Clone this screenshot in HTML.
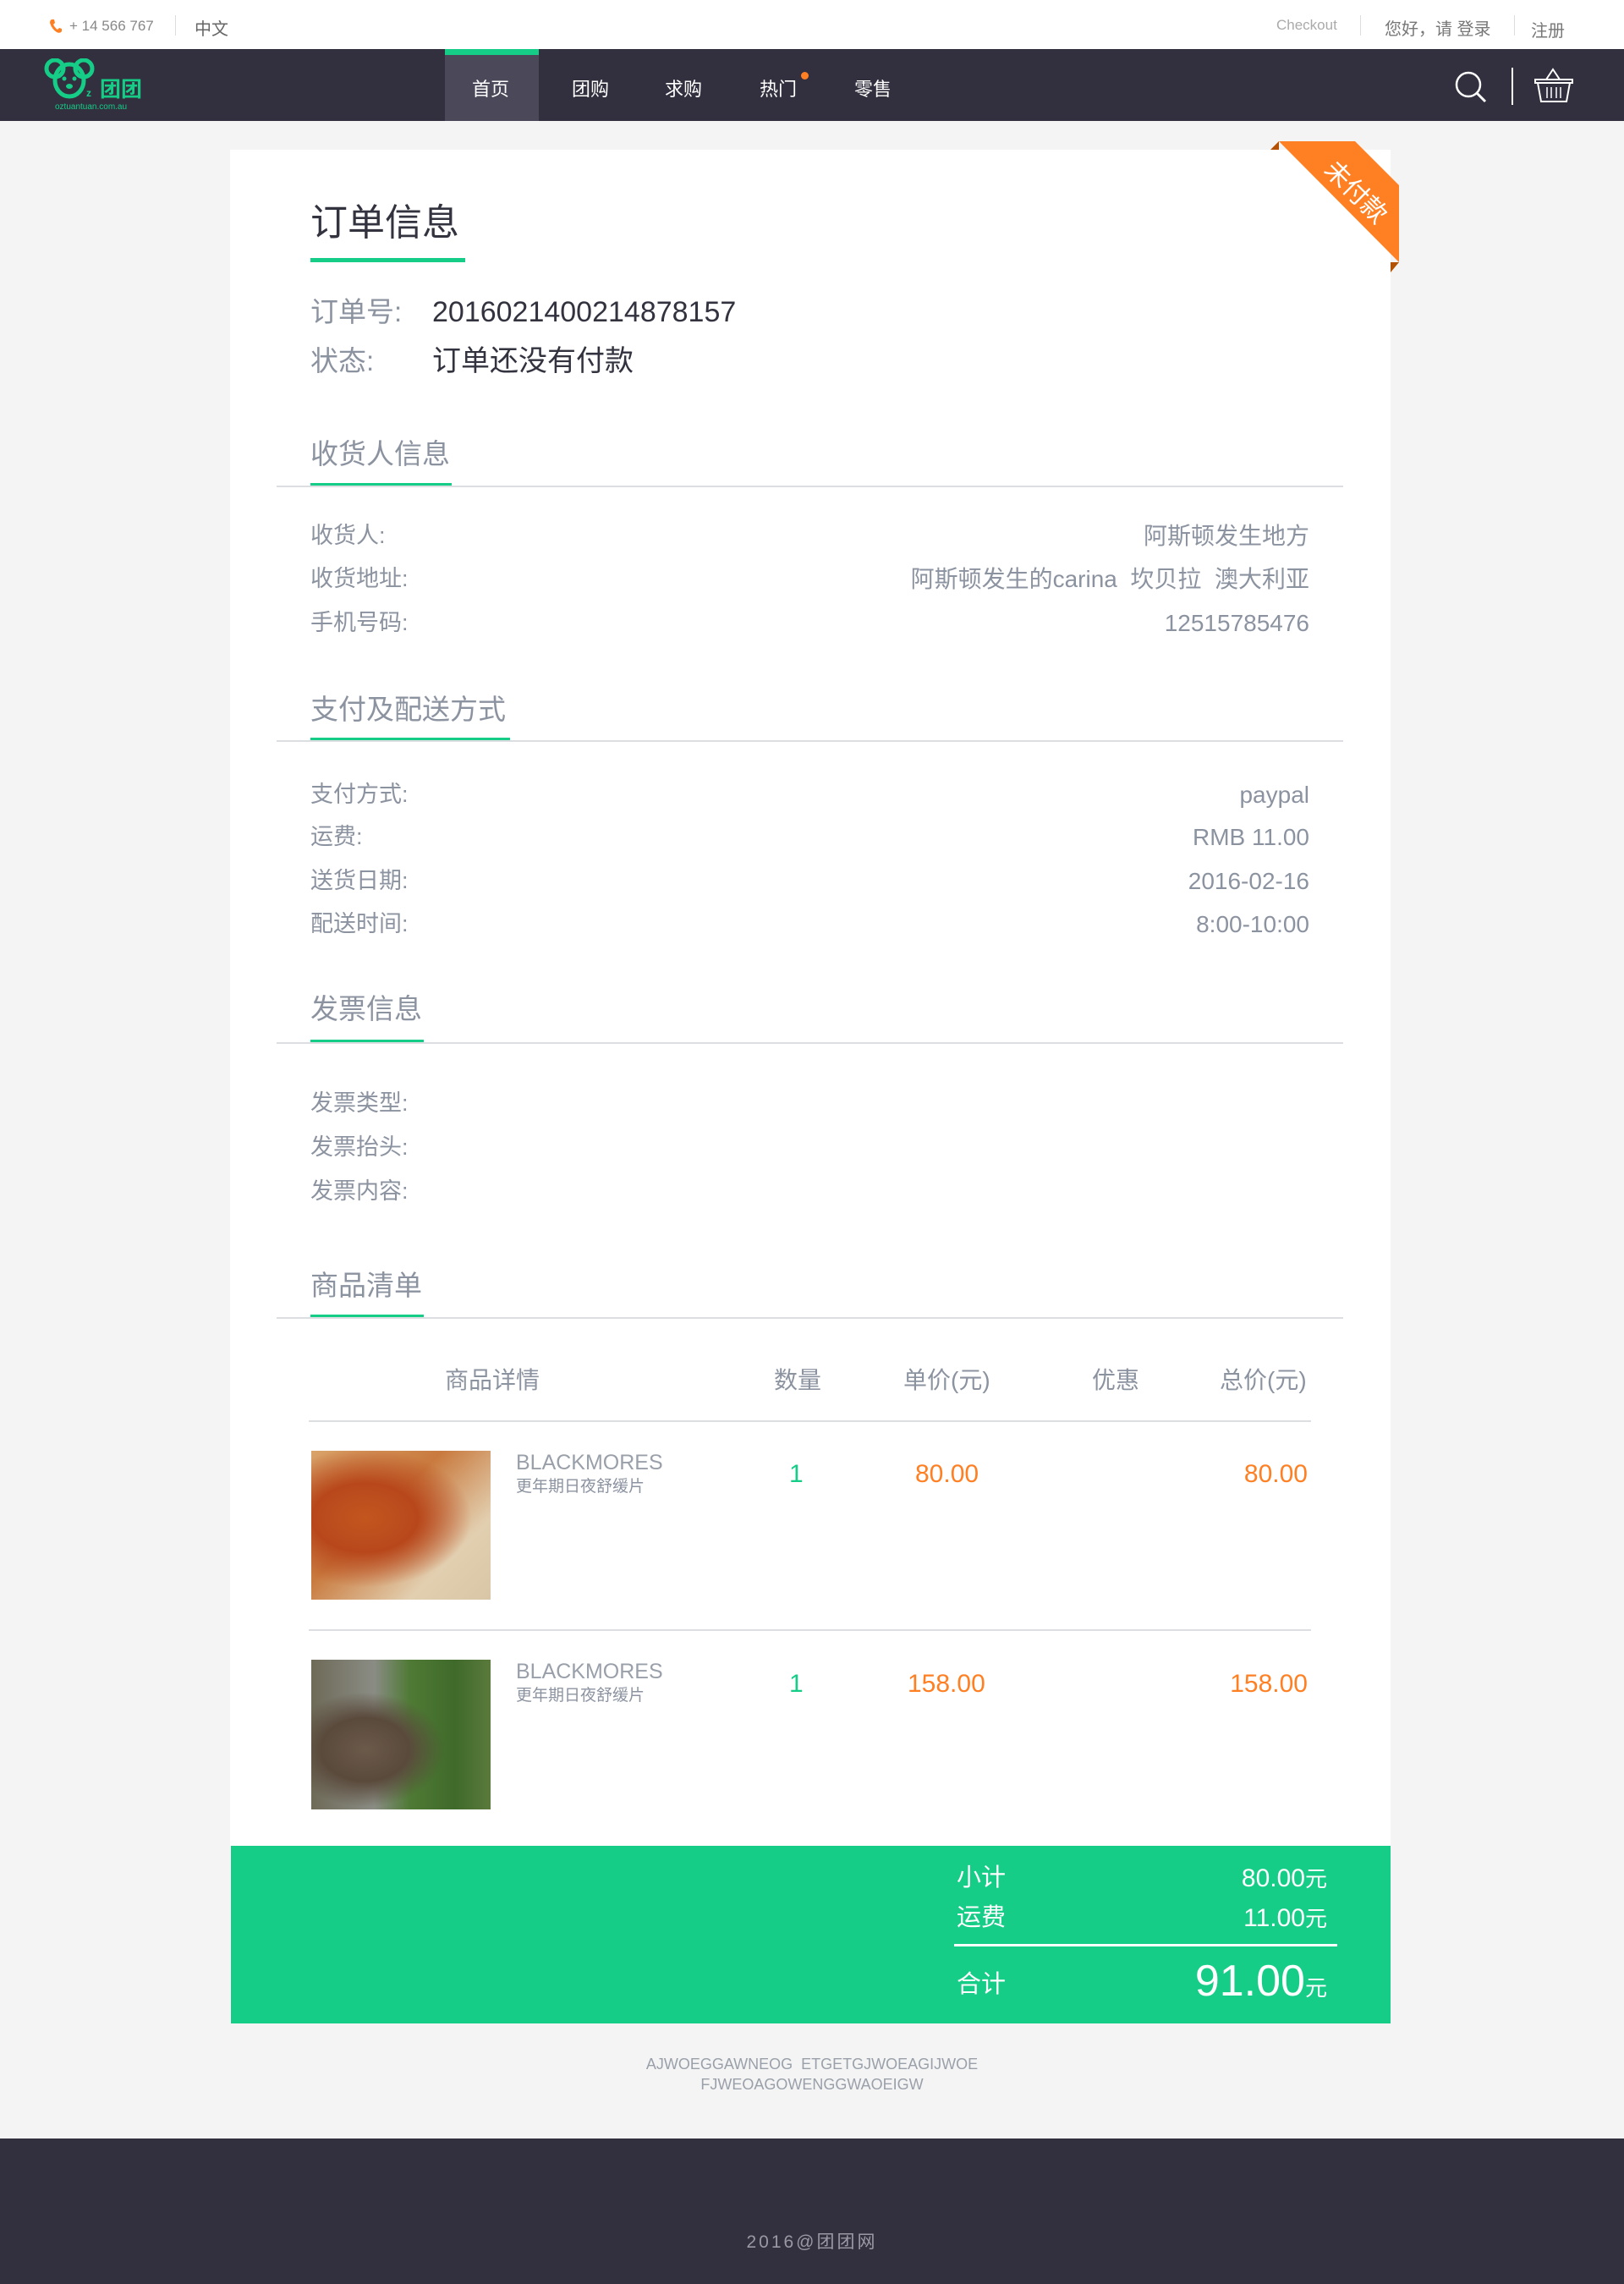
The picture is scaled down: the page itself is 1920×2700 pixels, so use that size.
<!DOCTYPE html>
<html><head><meta charset="utf-8"><style>
*{margin:0;padding:0;box-sizing:border-box}
body{width:1920px;height:2700px;background:#f4f4f4;position:relative;font-family:"Liberation Sans","Noto Sans CJK SC",sans-serif;overflow:hidden}
.a{position:absolute;white-space:nowrap}
.top{position:absolute;left:0;top:0;width:1920px;height:58px;background:#fff}
.nav{position:absolute;left:0;top:58px;width:1920px;height:85px;background:#322f3e}
.card{position:absolute;left:272px;top:177px;width:1372px;height:2215px;background:#fff}
.g{color:#8c93a0}
.sec{position:absolute;left:367px;font-size:33px;color:#8c93a0;line-height:1}
.ul{position:absolute;height:4px;background:#15cd86;left:367px}
.hl{position:absolute;left:327px;width:1261px;height:2px;background:#dcdee2}
.lab{position:absolute;left:367px;font-size:27px;color:#8c93a0;line-height:1}
.val{position:absolute;right:372px;font-size:28px;color:#8c93a0;line-height:1;text-align:right}
.th{position:absolute;top:1618px;font-size:28px;color:#8c93a0;line-height:1}
.or{color:#ff7f23}
</style></head><body>
<div class="top"></div>
<svg class="a" style="left:58px;top:22px" width="16" height="18" viewBox="0 0 16 18"><path d="M3 1 L6 1 L7 5 L5 7 Q7 11 10 13 L12 11 L15 12 L15 15 Q13 18 9 16 Q3 12 1 5 Q1 2 3 1Z" fill="#ff7f23"/></svg>
<div class="a" style="left:82px;top:21px;font-size:17px;color:#888">+ 14 566 767</div>
<div class="a" style="left:207px;top:18px;width:1px;height:24px;background:#ddd"></div>
<div class="a" style="left:230px;top:18px;font-size:20px;color:#666">中文</div>
<div class="a" style="left:1509px;top:20px;font-size:17px;color:#aaa">Checkout</div>
<div class="a" style="left:1608px;top:18px;width:1px;height:24px;background:#ddd"></div>
<div class="a" style="left:1637px;top:18px;font-size:20px;color:#777">您好，请 登录</div>
<div class="a" style="left:1790px;top:18px;width:1px;height:24px;background:#ddd"></div>
<div class="a" style="left:1810px;top:20px;font-size:20px;color:#777">注册</div>

<div class="nav"></div>
<svg class="a" style="left:52px;top:69px" width="122" height="66" viewBox="0 0 122 66">
<circle cx="13" cy="12" r="10" fill="none" stroke="#15cd86" stroke-width="5"/>
<circle cx="47" cy="12" r="10" fill="none" stroke="#15cd86" stroke-width="5"/>
<ellipse cx="30" cy="26" rx="17" ry="19" fill="none" stroke="#15cd86" stroke-width="5"/>
<circle cx="24" cy="24" r="2.5" fill="#15cd86"/><circle cx="36" cy="24" r="2.5" fill="#15cd86"/>
<ellipse cx="30" cy="33" rx="4" ry="3" fill="#15cd86"/>
<text x="50" y="45" font-size="12" font-weight="bold" fill="#15cd86" font-family="Liberation Sans">z</text>
<text x="66" y="45" font-size="25" font-weight="bold" fill="#15cd86" font-family="Noto Sans CJK SC">团团</text>
<text x="13" y="60" font-size="10" fill="#15cd86" font-family="Liberation Sans">oztuantuan.com.au</text>
</svg>
<div class="a" style="left:526px;top:58px;width:111px;height:85px;background:#4b4859"></div>
<div class="a" style="left:526px;top:58px;width:111px;height:7px;background:#15cd86"></div>
<div class="a" style="left:558px;top:88px;font-size:22px;color:#fff">首页</div>
<div class="a" style="left:676px;top:88px;font-size:22px;color:#fff">团购</div>
<div class="a" style="left:786px;top:88px;font-size:22px;color:#fff">求购</div>
<div class="a" style="left:898px;top:88px;font-size:22px;color:#fff">热门</div>
<div class="a" style="left:947px;top:85px;width:9px;height:9px;border-radius:50%;background:#ff7f23"></div>
<div class="a" style="left:1010px;top:88px;font-size:22px;color:#fff">零售</div>
<svg class="a" style="left:1718px;top:82px" width="44" height="44" viewBox="0 0 44 44"><circle cx="18" cy="18" r="14" fill="none" stroke="#fff" stroke-width="2.5"/><path d="M28 28 L38 38" stroke="#fff" stroke-width="3"/></svg>
<div class="a" style="left:1787px;top:80px;width:2px;height:44px;background:#fff"></div>
<svg class="a" style="left:1812px;top:80px" width="50" height="44" viewBox="0 0 50 44"><path d="M16 14 L24 2 L32 14" fill="none" stroke="#fff" stroke-width="2"/><path d="M3 14 H47 V18 H3Z" fill="none" stroke="#fff" stroke-width="2"/><path d="M6 18 L10 40 H40 L44 18" fill="none" stroke="#fff" stroke-width="2"/><path d="M17 23V36M22 23V36M28 23V36M33 23V36" stroke="#fff" stroke-width="1.5"/></svg>

<div class="card"></div>
<!-- ribbon -->
<div class="a" style="left:1502px;top:167px;width:10px;height:10px;background:#b35100;clip-path:polygon(100% 0,100% 100%,0 100%)"></div>
<div class="a" style="left:1644px;top:310px;width:10px;height:12px;background:#b35100;clip-path:polygon(0 0,100% 0,0 100%)"></div>
<div class="a" style="left:1502px;top:167px;width:152px;height:143px;background:#ff7f23;clip-path:polygon(10px 0,100px 0,152px 52px,152px 143px)"></div>
<div class="a" style="left:1560px;top:203px;font-size:30px;color:#fff;transform:rotate(45deg);transform-origin:center">未付款</div>

<div class="a" style="left:367px;top:242px;font-size:44px;color:#333340;line-height:1">订单信息</div>
<div class="ul" style="top:305px;width:183px;height:5px"></div>
<div class="a g" style="left:367px;top:352px;font-size:33px;line-height:1">订单号:</div>
<div class="a" style="left:511px;top:352px;font-size:34px;color:#333340;line-height:1">2016021400214878157</div>
<div class="a g" style="left:367px;top:410px;font-size:33px;line-height:1">状态:</div>
<div class="a" style="left:511px;top:410px;font-size:34px;color:#333340;line-height:1">订单还没有付款</div>

<div class="sec" style="top:520px">收货人信息</div>
<div class="ul" style="top:571px;width:167px"></div><div class="hl" style="top:574px"></div>
<div class="lab" style="top:620px">收货人:</div><div class="val" style="top:620px">阿斯顿发生地方</div>
<div class="lab" style="top:671px">收货地址:</div><div class="val" style="top:671px">阿斯顿发生的carina &nbsp;坎贝拉 &nbsp;澳大利亚</div>
<div class="lab" style="top:723px">手机号码:</div><div class="val" style="top:723px">12515785476</div>

<div class="sec" style="top:822px">支付及配送方式</div>
<div class="ul" style="top:872px;width:236px"></div><div class="hl" style="top:875px"></div>
<div class="lab" style="top:926px">支付方式:</div><div class="val" style="top:926px">paypal</div>
<div class="lab" style="top:976px">运费:</div><div class="val" style="top:976px">RMB 11.00</div>
<div class="lab" style="top:1028px">送货日期:</div><div class="val" style="top:1028px">2016-02-16</div>
<div class="lab" style="top:1079px">配送时间:</div><div class="val" style="top:1079px">8:00-10:00</div>

<div class="sec" style="top:1176px">发票信息</div>
<div class="ul" style="top:1229px;width:134px"></div><div class="hl" style="top:1232px"></div>
<div class="lab" style="top:1291px">发票类型:</div>
<div class="lab" style="top:1343px">发票抬头:</div>
<div class="lab" style="top:1395px">发票内容:</div>

<div class="sec" style="top:1503px">商品清单</div>
<div class="ul" style="top:1554px;width:134px"></div><div class="hl" style="top:1557px"></div>

<div class="th" style="left:526px">商品详情</div>
<div class="th" style="left:915px">数量</div>
<div class="th" style="left:1068px">单价(元)</div>
<div class="th" style="left:1291px">优惠</div>
<div class="th" style="left:1442px">总价(元)</div>
<div class="a" style="left:365px;top:1679px;width:1185px;height:2px;background:#dcdee2"></div>

<div class="a" style="left:368px;top:1715px;width:212px;height:176px;background:radial-gradient(ellipse at 30% 45%,#c3561f 0,#b8481c 30%,transparent 60%),linear-gradient(135deg,#d9a36a,#c97a3e 40%,#e2cfb0 75%,#d8c6a6)"></div>
<div class="a" style="left:610px;top:1717px;font-size:25px;color:#9aa0aa;line-height:1">BLACKMORES</div>
<div class="a" style="left:610px;top:1748px;font-size:19px;color:#8c93a0;line-height:1">更年期日夜舒缓片</div>
<div class="a" style="left:933px;top:1728px;font-size:30px;color:#15cd86;line-height:1">1</div>
<div class="a or" style="left:1082px;top:1728px;font-size:30px;line-height:1">80.00</div>
<div class="a or" style="right:374px;top:1728px;font-size:30px;line-height:1">80.00</div>
<div class="a" style="left:365px;top:1926px;width:1185px;height:2px;background:#dcdee2"></div>

<div class="a" style="left:368px;top:1962px;width:212px;height:177px;background:radial-gradient(ellipse at 30% 60%,#6b5a4a 0,#5a4a3c 25%,transparent 45%),linear-gradient(90deg,#6e6a58 0,#8a8c84 35%,#4f7a35 55%,#3f6a2a 80%,#5a7a3c)"></div>
<div class="a" style="left:610px;top:1964px;font-size:25px;color:#9aa0aa;line-height:1">BLACKMORES</div>
<div class="a" style="left:610px;top:1995px;font-size:19px;color:#8c93a0;line-height:1">更年期日夜舒缓片</div>
<div class="a" style="left:933px;top:1976px;font-size:30px;color:#15cd86;line-height:1">1</div>
<div class="a or" style="left:1073px;top:1976px;font-size:30px;line-height:1">158.00</div>
<div class="a or" style="right:374px;top:1976px;font-size:30px;line-height:1">158.00</div>

<div class="a" style="left:273px;top:2182px;width:1371px;height:210px;background:#15cd86"></div>
<div class="a" style="left:1131px;top:2206px;font-size:29px;color:#fff;line-height:1">小计</div>
<div class="a" style="right:351px;top:2206px;font-size:30px;color:#fff;line-height:1">80.00<span style="font-size:26px">元</span></div>
<div class="a" style="left:1131px;top:2253px;font-size:29px;color:#fff;line-height:1">运费</div>
<div class="a" style="right:351px;top:2253px;font-size:30px;color:#fff;line-height:1">11.00<span style="font-size:26px">元</span></div>
<div class="a" style="left:1128px;top:2298px;width:453px;height:3px;background:#fff"></div>
<div class="a" style="left:1131px;top:2332px;font-size:29px;color:#fff;line-height:1">合计</div>
<div class="a" style="right:351px;top:2316px;font-size:52px;color:#fff;line-height:1">91.00<span style="font-size:26px">元</span></div>

<div class="a" style="left:0;width:1920px;top:2428px;text-align:center;font-size:18px;color:#9aa0aa;line-height:24px">AJWOEGGAWNEOG &nbsp;ETGETGJWOEAGIJWOE<br>FJWEOAGOWENGGWAOEIGW</div>
<div class="a" style="left:0;top:2528px;width:1920px;height:172px;background:#322f3e"></div>
<div class="a" style="left:0;width:1920px;top:2634px;text-align:center;font-size:21px;color:#9a99a3;letter-spacing:3px">2016@团团网</div>
</body></html>
